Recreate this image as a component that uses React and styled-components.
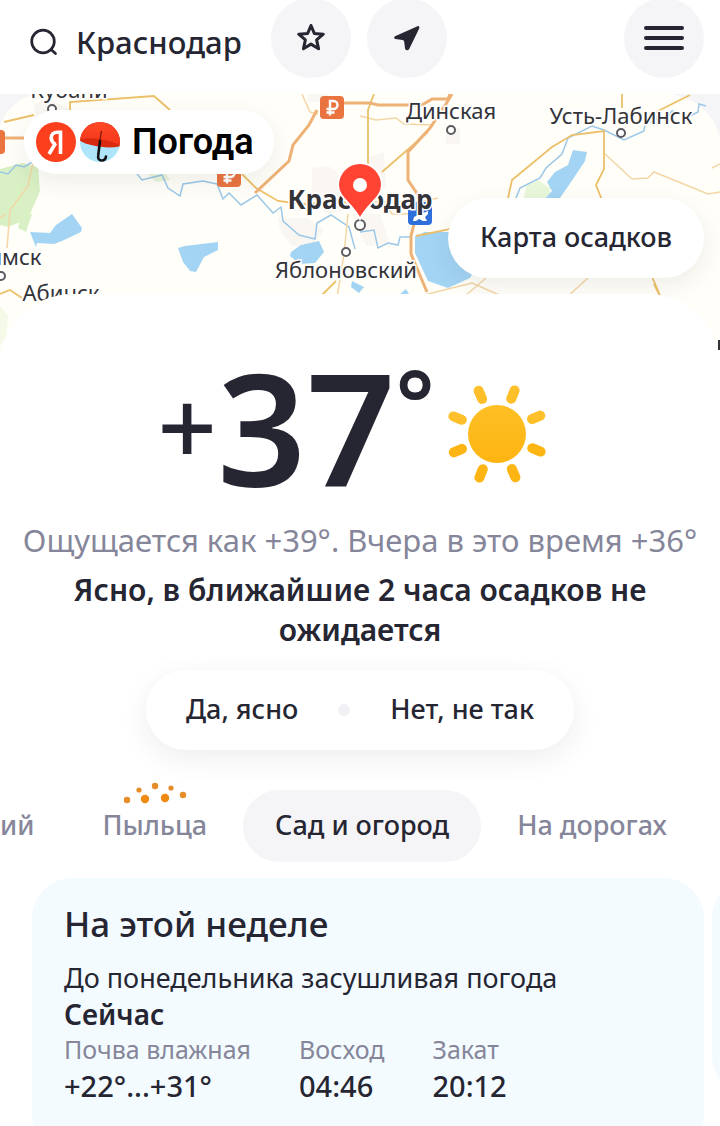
import React, { useState } from "react";
import styled, { createGlobalStyle } from "styled-components";

const GlobalStyle = createGlobalStyle`
  * {
    box-sizing: border-box;
  }

  body {
    margin: 0;
    background: #ffffff;
    color: #262633;
    font-family: "Noto Sans", "Open Sans", sans-serif;
    overflow-x: hidden;
  }

  button,
  input {
    font-family: inherit;
    color: inherit;
  }
`;

const Page = styled.div`
  width: 100%;
  overflow: hidden;
`;

const Header = styled.header`
  display: flex;
  align-items: flex-start;
  gap: 16px;
  height: 94px;
  padding: 0 16px 0 28px;
`;

const Search = styled.label`
  display: flex;
  align-items: center;
  gap: 16px;
  height: 84px;
`;

const SearchInput = styled.input`
  width: 179px;
  padding: 0;
  border: none;
  outline: none;
  background: transparent;
  font-size: 31px;
  font-weight: 500;
  line-height: 40px;
`;

const RoundButton = styled.button`
  display: flex;
  flex: none;
  align-items: center;
  justify-content: center;
  width: 80px;
  height: 80px;
  margin-top: -2px;
  margin-left: ${(props) => (props.$last ? "auto" : "0")};
  padding: 0;
  border: none;
  border-radius: 40px;
  background: #f5f5f8;
`;

const MapBox = styled.section`
  position: relative;
  height: 262px;
  overflow: hidden;
  background: #fffefa;
`;

const MapSvg = styled.svg`
  display: block;
  width: 100%;
  height: 100%;
`;

const LogoLink = styled.a`
  position: absolute;
  top: 16px;
  left: 24px;
  display: flex;
  align-items: center;
  gap: 4px;
  height: 64px;
  padding: 0 20px 0 12px;
  border-radius: 32px;
  background: #ffffff;
  box-shadow: 0 8px 24px rgba(38, 38, 51, 0.08);
  color: #000000;
  text-decoration: none;
`;

const LogoText = styled.span`
  margin-left: 8px;
  font-family: Roboto, sans-serif;
  font-size: 36px;
  font-weight: 600;
  line-height: 40px;
`;

const MapButton = styled.button`
  position: absolute;
  top: 104px;
  right: 16px;
  height: 80px;
  padding: 0 32px 4px;
  border: none;
  border-radius: 40px;
  background: #ffffff;
  box-shadow: 0 8px 24px rgba(38, 38, 51, 0.08);
  font-size: 27px;
  font-weight: 500;
`;

const Sheet = styled.main`
  position: relative;
  margin-top: -62px;
  padding-top: 48px;
  border-radius: 72px 72px 0 0;
  background: #ffffff;
`;

const Fact = styled.div`
  display: flex;
  align-items: center;
  justify-content: center;
  gap: 12px;
  height: 168px;
  padding-right: 16px;
`;

const Temp = styled.div`
  display: flex;
  align-items: center;
  font-size: 156px;
  font-weight: 600;
  line-height: 168px;
`;

const Sign = styled.span`
  font-size: 104px;
  font-weight: 500;
`;

const Degree = styled.span`
  align-self: flex-start;
  font-size: 92px;
  line-height: 120px;
`;

const Sun = styled.svg`
  width: 100px;
  height: 100px;
  margin-top: 16px;
`;

const Feels = styled.p`
  margin: 12px 0 0;
  padding: 0 16px;
  font-size: 31px;
  line-height: 36px;
  text-align: center;
  color: #86869a;
`;

const Condition = styled.h1`
  margin: 12px 0 0;
  padding: 0 48px;
  font-size: 30px;
  font-weight: 600;
  line-height: 40px;
  text-align: center;
`;

const Vote = styled.div`
  display: flex;
  align-items: center;
  justify-content: center;
  width: fit-content;
  height: 80px;
  margin: 20px auto 0;
  padding: 0 40px;
  gap: 40px;
  border-radius: 40px;
  background: #ffffff;
  box-shadow: 0 8px 28px rgba(38, 38, 51, 0.08);
`;

const VoteButton = styled.button`
  padding: 0 0 4px;
  border: none;
  background: none;
  font-size: 27px;
  font-weight: 500;
`;

const Dot = styled.span`
  width: 12px;
  height: 12px;
  border-radius: 6px;
  background: #f0f0f5;
`;

const Tabs = styled.nav`
  display: flex;
  gap: 4px;
  margin-top: 40px;
`;

const Tab = styled.button`
  position: relative;
  flex: none;
  height: 72px;
  padding: ${(props) => (props.$cut ? "0 32px 4px 0" : "0 32px 4px")};
  border: none;
  border-radius: 36px;
  background: ${(props) => (props.$active ? "#f5f5f8" : "transparent")};
  color: ${(props) => (props.$active ? "#262633" : "#86869a")};
  font-size: 27px;
  font-weight: 500;
  white-space: nowrap;
`;

const Pollen = styled.svg`
  position: absolute;
  top: -10px;
  left: 50%;
  width: 64px;
  height: 24px;
  margin-left: -32px;
`;

const Cards = styled.div`
  display: flex;
  align-items: flex-start;
  gap: 8px;
  margin-top: 16px;
  padding-left: 32px;
`;

const Card = styled.section`
  flex: none;
  width: calc(100vw - 48px);
  min-height: ${(props) => props.$height};
  padding: 24px 32px;
  border-radius: 40px;
  background: #f3fbff;
`;

const CardTitle = styled.h2`
  margin: 0;
  font-size: 35px;
  font-weight: 500;
  line-height: 44px;
`;

const CardText = styled.p`
  margin: 14px 0 0;
  font-size: 27px;
  line-height: 36px;
`;

const Now = styled.h3`
  margin: 0;
  font-size: 28px;
  font-weight: 600;
  line-height: 36px;
`;

const Facts = styled.dl`
  display: flex;
  gap: 48px;
  margin: 0;
`;

const FactLabel = styled.dt`
  font-size: 25px;
  line-height: 34px;
  color: #86869a;
`;

const FactValue = styled.dd`
  margin: 0;
  font-size: 29px;
  font-weight: 500;
  line-height: 40px;
`;

const MapLabel = styled.text`
  font-size: ${(props) => (props.$big ? "26px" : "22px")};
  font-weight: ${(props) => (props.$big ? 700 : 400)};
  fill: #333338;
  stroke: #ffffff;
  stroke-width: 3px;
  paint-order: stroke;
`;

const tabs = ["ий", "Пыльца", "Сад и огород", "На дорогах"];

const facts = [
  { label: "Почва влажная", value: "+22°...+31°" },
  { label: "Восход", value: "04:46" },
  { label: "Закат", value: "20:12" },
];

const towns = [
  { name: "Кубани", x: 69, y: 4, dotX: 52, dotY: 15 },
  { name: "Динская", x: 451, y: 25, dotX: 451, dotY: 36 },
  { name: "Усть-Лабинск", x: 621, y: 30, dotX: 621, dotY: 39 },
  { name: "Яблоновский", x: 346, y: 184, dotX: 346, dotY: 158 },
  { name: "имск", x: 15, y: 171, dotX: 1, dotY: 182 },
  { name: "Абинск", x: 61, y: 207, dotX: 61, dotY: 220 },
];

const rays = [22, 67, 112, 157, 202, 247, 292, 337];

const SearchIcon = () => (
  <svg width="32" height="32" viewBox="0 0 32 32" fill="none">
    <circle cx="15" cy="15.500" r="11.300" stroke="#262633" strokeWidth="2.700" />
    <path
      d="M23 23.500l4.500 4"
      stroke="#262633"
      strokeWidth="2.700"
      strokeLinecap="round"
    />
  </svg>
);

const StarIcon = () => (
  <svg width="32" height="32" viewBox="0 0 32 32" fill="none">
    <path
      d="M16 3.500l3.300 7.900 9 .8-6.700 5.700 2 8.900-7.600-4.700-7.600 4.700 2-8.900-6.700-5.700 9-.8z"
      stroke="#262633"
      strokeWidth="3"
      strokeLinejoin="round"
    />
  </svg>
);

const ArrowIcon = () => (
  <svg width="32" height="32" viewBox="0 0 32 32">
    <path
      d="M26.500 4.200L4 14.200c-1.200.6-1 2.400.3 2.700L11.500 18c1 .2 1.500.7 1.700 1.700l.8 6.600c.2 2.200 3.200 2.600 4.200.6l10-20.500c.5-1.500-.3-2.600-1.700-2.200z"
      fill="#262633"
    />
  </svg>
);

const MenuIcon = () => (
  <svg width="40" height="28" viewBox="0 0 40 28">
    <path
      d="M2 4h36M2 14h36M2 24h36"
      stroke="#262633"
      strokeWidth="4"
      strokeLinecap="round"
    />
  </svg>
);

const YandexIcon = () => (
  <svg width="40" height="40" viewBox="0 0 40 40">
    <circle cx="20" cy="20" r="20" fill="#fc3f1d" />
    <path
      d="M24.500 8.500V32M24.500 10.200H21.500c-4 0-6.300 2.200-6.300 5.700 0 3 1.500 4.700 4.300 6.500M19.500 21.300L13 32"
      fill="none"
      stroke="#ffffff"
      strokeWidth="3.600"
    />
  </svg>
);

const UmbrellaIcon = () => (
  <svg width="40" height="40" viewBox="0 0 40 40">
    <defs>
      <clipPath id="disc">
        <circle cx="20" cy="20" r="20" />
      </clipPath>
      <linearGradient id="dome" x1="0" y1="0" x2="0" y2="1">
        <stop offset="0" stopColor="#ff4a26" />
        <stop offset="1" stopColor="#f5361a" />
      </linearGradient>
    </defs>
    <g clipPath="url(#disc)">
      <rect width="40" height="40" fill="#aee5fb" />
      <path d="M-1 18C4 23 28 28 41 24V-1H-1z" fill="#d92a10" />
      <path d="M-1 18C8 14 30 17 41 24V-1H-1z" fill="url(#dome)" />
    </g>
    <path d="M21.500 9L19.500 20" stroke="#8c1c10" strokeWidth="1.400" />
    <path
      d="M20 19l-1.800 14.500c-.5 3 .8 5 3.500 5s4-1.700 4.300-4"
      fill="none"
      stroke="#111111"
      strokeWidth="2.600"
      strokeLinecap="round"
    />
  </svg>
);

const SunIcon = () => (
  <Sun viewBox="0 0 100 100">
    <defs>
      <linearGradient
        id="sun"
        gradientUnits="userSpaceOnUse"
        x1="0"
        y1="0"
        x2="0"
        y2="100"
      >
        <stop offset="0" stopColor="#fec42d" />
        <stop offset="1" stopColor="#fdb009" />
      </linearGradient>
    </defs>
    <circle cx="50" cy="50" r="29" fill="url(#sun)" />
    {rays.map((angle) => {
      const a = (angle * Math.PI) / 180;
      return (
        <line
          key={angle}
          x1={50 + 38 * Math.cos(a)}
          y1={50 + 38 * Math.sin(a)}
          x2={50 + 47 * Math.cos(a)}
          y2={50 + 47 * Math.sin(a)}
          stroke={angle > 180 ? "#fdc02b" : "#fdb514"}
          strokeWidth="10"
          strokeLinecap="round"
        />
      );
    })}
  </Sun>
);

const RoadSign = ({ x, y }) => (
  <g transform={`translate(${x} ${y})`}>
    <rect width="24" height="23" rx="4" fill="#ea7440" />
    <path
      d="M10 19.500V5h3.500a4 4 0 010 8H6.500M6.500 16.500h8"
      fill="none"
      stroke="#ffffff"
      strokeWidth="2.400"
    />
  </g>
);

const RegionMap = () => (
  <MapSvg
    viewBox="0 0 720 262"
    preserveAspectRatio="xMidYMin slice"
    role="img"
    aria-label="Карта"
  >
    <rect width="720" height="262" fill="#fffef8" />
    <path d="M0 0h36C14 6 4 18 0 34zM720 0h-48c26 6 42 20 48 44z" fill="#f5f5f8" />
    <g fill="#faf6f2">
      <path d="M34 10l16-4 18 8v12H36zM312 74l16-2 14 10 8 34-24 4-14-20z" />
      <path d="M278 124h30l16 12-14 18-18-2-12-16zM368 64l16-6 2 34-14 14zM446 34h14v16h-14zM308 0h20v8h-20z" />
      <path d="M352 120h28l10 30-24 2z" />
    </g>
    <g fill="#d9f0c4">
      <path d="M0 75l22-6 16 4 2 24-12 28-20 8-8-2zM22 120h10l-6 18-8-4z" />
      <path d="M146 78l20 2 4 6-14 2zM526 92l12-6 12 8v10h-26z" opacity=".6" />
      <path d="M0 212l8 10-2 20-6 10z" opacity=".3" />
    </g>
    <g fill="#a3d4f4">
      <path d="M30 138l20 1 6-8 16-11 10 14-1 4-19 9-8 3-17-1-1 4z" />
      <path d="M178 154l7-2 33-4v8l-14 7-8 15-6-1-7-9z" />
      <path d="M291 158l10-7 18-4 5 11-9 11-15 1-10-8z" />
      <path d="M415 142l10-4h70l-25 46-22 10-20-7-13-28z" />
      <path d="M573 56l14 2-2 9-16 24-14 20h-16l13-14-5-9 8-10 13-7z" />
      <path d="M352 187l12 6-5 6-8-6zM400 200l6-5 3 5z" />
    </g>
    <g fill="none" stroke="#9bc8e8" strokeWidth="1.500">
      <path d="M0 78l8 2 8-9 8 2 10-6M134 76l8 10 20-5 6 13 12 8 3-12 20-3 14 3 6 15 6-6 12 12 16-10 16 18 8-6 2 14 16 14 16 4 2-16 14-8 18 12 6 22" />
      <path d="M360 138l14-2 4 18 10-5 10 2 2-8h12" />
      <path d="M516 104l4-10 20-10 6-10 16-14 3-8 3-8 24-12 12 4 20 10 20-9 2-14 8 8 4-10 8 6 6-10 14 4M690 22l8-4 1-8 7 2" />
    </g>
    <g fill="none" stroke="#f3d6a6" strokeWidth="1.500">
      <path d="M34 64L28 92 10 116l-3 38M0 124l6-4" />
      <path d="M302 0l8 18 8 2M360 22l16 4 20-2 8 6 30 1" />
      <path d="M604 59l28 26 16-1 6-6 54 22 12-2M460 206l12-10 14-12M360 108l60 0 18-4M348 120l-4 40-8 50 22-4" />
      <path d="M384 110l8 10h24M420 202l52-13 32 14M566 204l24-22M712 74l8-4" />
    </g>
    <g fill="none" stroke="#ecc069" strokeWidth="1.800">
      <path d="M70 22V8l84-6 16 14M4 28l30-7" />
      <path d="M242 80l14 14 22 13 24 3 26-1 26-1M374 0l-6 16v66M382 78l46-40" />
      <path d="M622 0v14M690 1l-36 18M508 104l4-18 40-33 20-12 32-4v38l-8 16 8 20" />
      <path d="M416 142l30-6 6-2M0 200l10-4 12 8M322 201l14-14M650 178l12 28M654 190l6 12" />
    </g>
    <g fill="none" stroke="#eeb277" strokeWidth="3">
      <path d="M0 44h24M255 99l34-32 4-16 16-20 8-15" />
      <path d="M334 9h36l8 2h44l10-6h16l2-5M452 0l-6 10-16 24-22 24v28l12 18M414 130l-3 12v18l16 38" />
    </g>
    <rect x="-18" y="36" width="23" height="24" rx="4" fill="#ea7440" />
    <RoadSign x={320} y={2} />
    <RoadSign x={217} y={70} />
    <rect x="408" y="108" width="24" height="23" rx="4" fill="#2f6fdc" />
    <path
      d="M413 127l1-4 4-2-1-8h3l3 6 5-2v3l-3 3 2 4h-4l-4-2-3 2z"
      fill="#ffffff"
    />
    {towns.map((town) => (
      <g key={town.name}>
        <circle
          cx={town.dotX}
          cy={town.dotY}
          r="4"
          fill="#ffffff"
          stroke="#5a5a60"
          strokeWidth="2"
        />
        <MapLabel x={town.x} y={town.y} textAnchor="middle">
          {town.name}
        </MapLabel>
      </g>
    ))}
    <MapLabel $big x="360" y="115" textAnchor="middle">
      Краснодар
    </MapLabel>
    <circle cx="360" cy="131" r="5" fill="#ffffff" stroke="#5a5a60" strokeWidth="2" />
    <path
      d="M360 69a22 22 0 0122 22c0 13-14 18-22 34-8-16-22-21-22-34a22 22 0 0122-22z"
      fill="#ff4433"
      stroke="#ffffff"
      strokeWidth="2"
    />
    <circle cx="360" cy="91" r="7" fill="#ffffff" />
    <rect x="718" y="246" width="2" height="10" fill="#333338" />
  </MapSvg>
);

const PollenDots = () => (
  <Pollen viewBox="0 0 64 24" fill="#e58e29">
    <circle cx="4" cy="20" r="3.200" />
    <circle cx="16" cy="10" r="2.600" />
    <circle cx="22" cy="19" r="4.200" fill="#ee8a12" />
    <circle cx="32" cy="6" r="3.200" />
    <circle cx="42" cy="18" r="4.200" fill="#ee8a12" />
    <circle cx="48" cy="8" r="2.600" />
    <circle cx="60" cy="15" r="3.200" />
  </Pollen>
);

const App = () => {
  const [city, setCity] = useState("Краснодар");
  const [active, setActive] = useState("Сад и огород");

  const handleCity = (event) => {
    setCity(event.target.value);
  };

  return (
    <Page>
      <GlobalStyle />
      <Header>
        <Search>
          <SearchIcon />
          <SearchInput
            type="text"
            aria-label="Город"
            value={city}
            onChange={handleCity}
          />
        </Search>
        <RoundButton aria-label="В избранное">
          <StarIcon />
        </RoundButton>
        <RoundButton aria-label="Моё местоположение">
          <ArrowIcon />
        </RoundButton>
        <RoundButton $last aria-label="Меню">
          <MenuIcon />
        </RoundButton>
      </Header>
      <MapBox>
        <RegionMap />
        <LogoLink href="#">
          <YandexIcon />
          <UmbrellaIcon />
          <LogoText>Погода</LogoText>
        </LogoLink>
        <MapButton>Карта осадков</MapButton>
      </MapBox>
      <Sheet>
        <Fact>
          <Temp>
            <Sign>+</Sign>
            37
            <Degree>°</Degree>
          </Temp>
          <SunIcon />
        </Fact>
        <Feels>Ощущается как +39°. Вчера в это время +36°</Feels>
        <Condition>Ясно, в ближайшие 2 часа осадков не ожидается</Condition>
        <Vote>
          <VoteButton>Да, ясно</VoteButton>
          <Dot />
          <VoteButton>Нет, не так</VoteButton>
        </Vote>
        <Tabs>
          {tabs.map((tab, index) => (
            <Tab
              key={tab}
              $cut={index === 0}
              $active={tab === active}
              onClick={() => setActive(tab)}
            >
              {tab === "Пыльца" && <PollenDots />}
              {tab}
            </Tab>
          ))}
        </Tabs>
        <Cards>
          <Card $height="278px">
            <CardTitle>На этой неделе</CardTitle>
            <CardText>До понедельника засушливая погода</CardText>
            <Now>Сейчас</Now>
            <Facts>
              {facts.map((fact) => (
                <div key={fact.label}>
                  <FactLabel>{fact.label}</FactLabel>
                  <FactValue>{fact.value}</FactValue>
                </div>
              ))}
            </Facts>
          </Card>
          <Card $height="218px" />
        </Cards>
      </Sheet>
    </Page>
  );
};

export default App;
